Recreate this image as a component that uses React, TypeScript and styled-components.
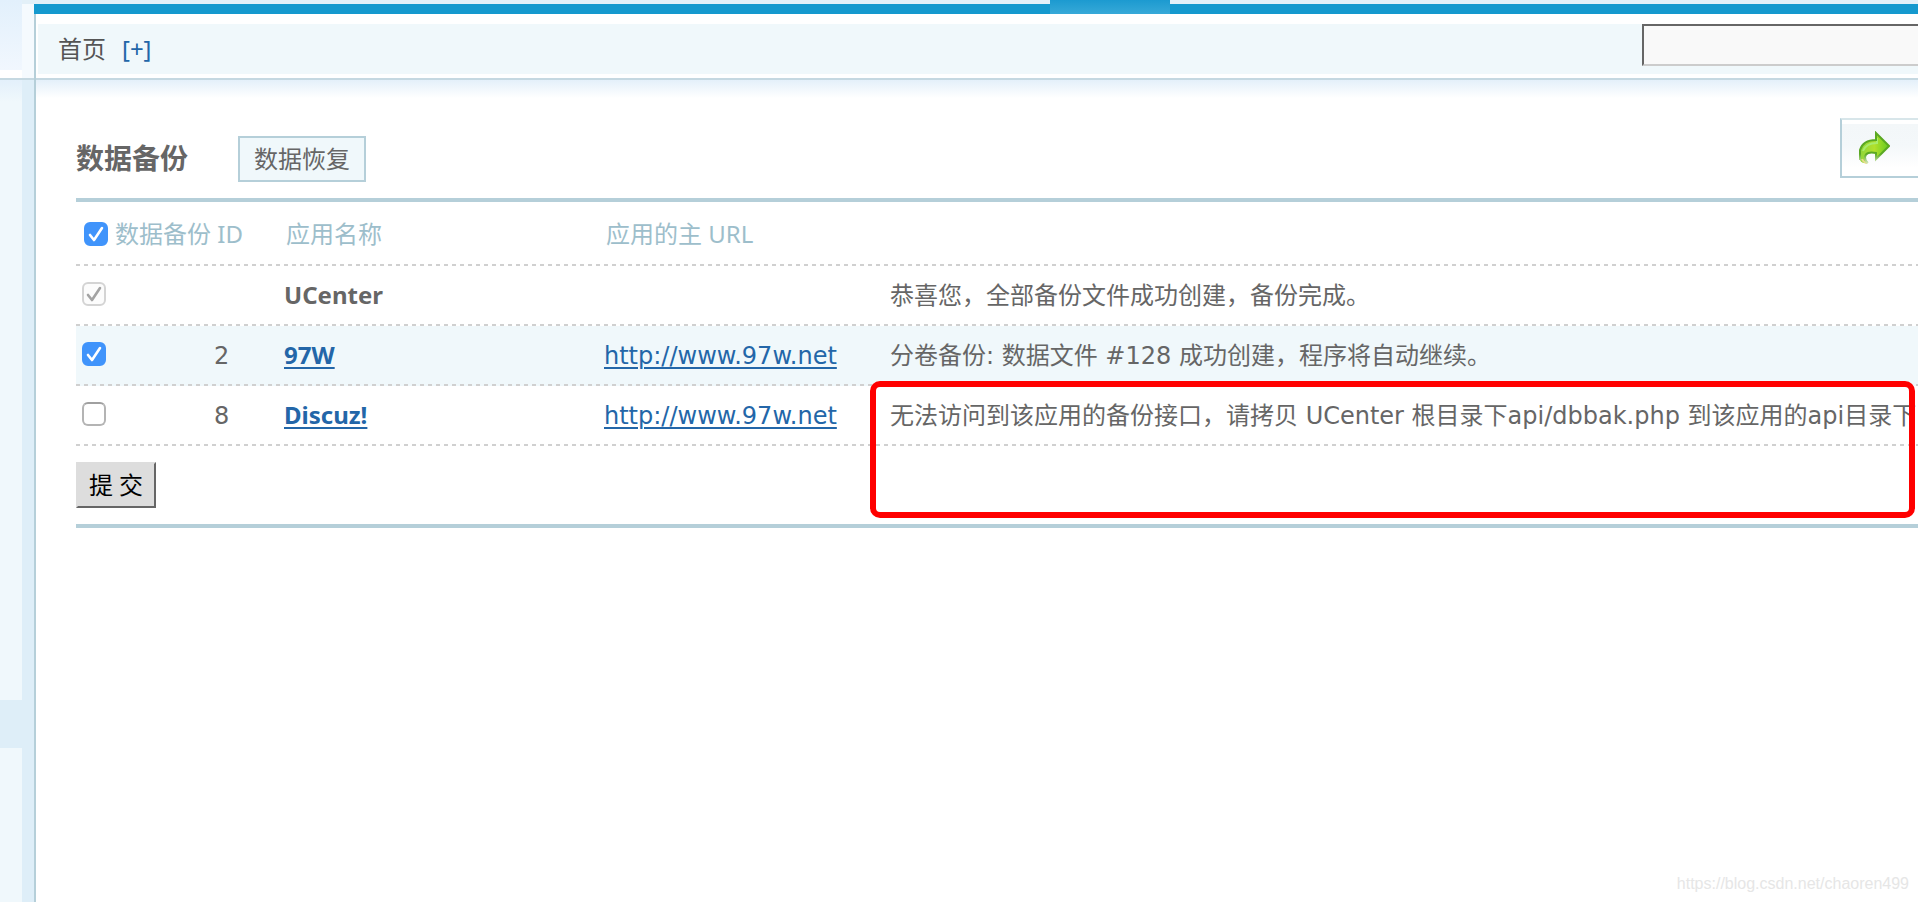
import React from "react";
import styled, { createGlobalStyle } from "styled-components";

const GlobalStyle = createGlobalStyle`
  *, *::before, *::after { box-sizing: border-box; }
  body {
    margin: 0;
    background: #fff;
    color: #666;
    font: 24px/32px "Noto Sans", "Noto Sans CJK SC", sans-serif;
  }
`;

const Page = styled.div`
  position: relative;
  display: flex;
  min-height: 100vh;
  overflow: hidden;
`;

const Sidebar = styled.aside`
  flex: none;
  width: 34px;
  display: flex;
  flex-direction: column;
`;

const SidebarTop = styled.div`
  display: flex;
  height: 80px;
  border-bottom: 2px solid #c5d8e1;
`;

const SidebarBanner = styled.div`
  width: 22px;
  height: 70px;
  background: linear-gradient(#e2f0fc, #f1f7fe);
`;

const SidebarBannerEdge = styled.div`
  flex: 1;
  border-top: 4px solid #e3f0f8;
  background: #f5fafe;
`;

const SidebarBody = styled.div`
  flex: 1;
  display: flex;
  flex-direction: column;
  background: #deeef8;
`;

const MenuStrip = styled.nav`
  flex: 1;
  width: 22px;
  padding-top: 620px;
  background: linear-gradient(#e3f0fb, #f0f8fc 22px);
`;

const ActiveMenuItem = styled.div`
  height: 48px;
  background: #deeef8;
`;

const Main = styled.div`
  flex: 1;
  min-width: 0;
  display: flex;
  flex-direction: column;
`;

const TopBar = styled.div`
  height: 14px;
  border-top: 4px solid #e3f0f8;
  background: #1599ce;
`;

const ActiveTab = styled.div`
  width: 120px;
  height: 14px;
  margin: -4px 0 0 1016px;
  background: linear-gradient(#1c9ad0, #37a9d8);
`;

const Frame = styled.div`
  flex: 1;
  display: flex;
  flex-direction: column;
  border-left: 2px solid #b5cfd9;
`;

const Crumbs = styled.header`
  display: flex;
  align-items: flex-start;
  height: 50px;
  margin: 10px 0 4px 2px;
  padding-left: 20px;
  background: #f0f8fb;
`;

const CrumbText = styled.div`
  display: flex;
  gap: 16px;
  padding-top: 9px;
  color: #555;
`;

const AddLink = styled.a`
  color: #2366a8;
  text-decoration: none;
`;

const SearchBox = styled.input`
  width: 276px;
  height: 42px;
  margin-left: auto;
  border: 2px solid #666;
  border-right: 0;
  border-bottom-color: #ccc;
  border-radius: 0;
  background: #f9f9f9;
  font: inherit;
  outline: none;
`;

const Content = styled.main`
  flex: 1;
  position: relative;
  padding: 38px 0 0 40px;
  border-top: 2px solid #c5d8e1;
  background: linear-gradient(#e4f0fa, #fff 18px);
`;

const TitleRow = styled.div`
  display: flex;
  align-items: flex-start;
  height: 80px;
`;

const Title = styled.h1`
  width: 162px;
  margin: 20px 0 0;
  font-size: 28px;
  line-height: 40px;
  font-weight: 700;
`;

const RestoreButton = styled.button`
  width: 128px;
  height: 46px;
  margin-top: 18px;
  padding: 0;
  border: 2px solid #b5cfd9;
  background: #f0f8fb;
  color: #666;
  font: inherit;
  white-space: nowrap;
`;

const ShareButton = styled.button`
  width: 78px;
  height: 60px;
  margin-left: auto;
  padding: 0 0 0 16px;
  border: 2px solid #b5cfd9;
  border-top-color: #d8e6ea;
  border-right: 0;
  background: linear-gradient(#fff 4px, #f3f7f9 4px, #f4f8fa 26px, #fff 48px);
  text-align: left;

  svg { display: block; }
`;

const Panel = styled.form`
  border-top: 4px solid #b5cfd9;
  border-bottom: 4px solid #b5cfd9;
`;

const Table = styled.table`
  width: 100%;
  table-layout: fixed;
  border-collapse: collapse;
`;

const Row = styled.tr<{ $tall?: boolean; $tint?: boolean }>`
  height: ${(p) => (p.$tall ? 64 : 60)}px;
  background:
    repeating-linear-gradient(90deg, #d0d0d0 0 4px, transparent 4px 8px) left bottom / 100% 2px no-repeat,
    ${(p) => (p.$tint ? "#f0f8fb" : "transparent")};
`;

const HeadCell = styled.th`
  padding: 0 0 0 2px;
  color: #9dbecb;
  font-weight: 400;
  text-align: left;
  white-space: nowrap;
`;

const Cell = styled.td`
  padding: 0;
  font-family: "DejaVu Sans", "Noto Sans CJK SC", sans-serif;
  white-space: nowrap;
`;

const CheckCell = styled(Cell)`
  padding: 0 0 4px 6px;
`;

const NameCell = styled.td`
  padding: 0 0 2px;
  font-weight: 700;
  white-space: nowrap;
`;

const Label = styled.label`
  display: flex;
  align-items: center;
  gap: 7px;
  padding-left: 6px;
`;

const CheckBox = styled.span`
  display: grid;
  width: 24px;
  height: 24px;

  > * { grid-area: 1 / 1; }
  svg { pointer-events: none; }
`;

const CheckInput = styled.input`
  appearance: none;
  width: 24px;
  height: 24px;
  margin: 0;
  border: 2px solid #b4b4b4;
  border-top-color: #a0a0a0;
  border-radius: 6px;
  background: #fff;

  &:checked { border-color: #4094fb; background: #4094fb; }
  &:disabled { border-color: #d4d4d4; background: #fcfcfc; }
  & + svg { visibility: hidden; }
  &:checked + svg { visibility: visible; }
`;

const Link = styled.a`
  color: #2366a8;
  text-underline-offset: 3px;
  text-decoration-thickness: 2px;
`;

const Actions = styled.div`
  padding: 16px 0;
`;

const Submit = styled.button`
  display: block;
  width: 80px;
  height: 46px;
  padding: 0;
  border: 2px solid;
  border-color: #ddd #666 #666 #ddd;
  background: #ddd;
  color: #000;
  font: inherit;
`;

const Highlight = styled.div`
  position: absolute;
  top: 301px;
  left: 834px;
  right: 3px;
  height: 137px;
  border: 6px solid #f00;
  border-radius: 10px;
  pointer-events: none;
`;

const Watermark = styled.div`
  position: absolute;
  right: 9px;
  bottom: 8px;
  color: #e6e6e6;
  font: 16px/20px "Liberation Sans", sans-serif;
`;

function Check({ label, id, checked, disabled }: { label?: string; id?: string; checked?: boolean; disabled?: boolean }) {
  return (
    <CheckBox>
      <CheckInput type="checkbox" id={id} aria-label={label} defaultChecked={checked} disabled={disabled} />
      <svg width="24" height="24" viewBox="0 0 24 24" fill="none" aria-hidden="true">
        <path d="M6 13 L10 18 L18 6" stroke={disabled ? "#a3a3a3" : "#fff"} strokeWidth="2.6" strokeLinecap="round" strokeLinejoin="round" />
      </svg>
    </CheckBox>
  );
}

function ShareArrow() {
  return (
    <svg width="32" height="34" viewBox="0 0 32 34" aria-hidden="true">
      <defs>
        <linearGradient id="leaf" x1="0" y1="0" x2="1" y2="0">
          <stop offset="0" stopColor="#8fd63a" />
          <stop offset="0.5" stopColor="#b2e02c" />
          <stop offset="1" stopColor="#63cb20" />
        </linearGradient>
        <linearGradient id="rim" x1="0" y1="0" x2="0" y2="1">
          <stop offset="0.7" stopColor="#5aa823" />
          <stop offset="1" stopColor="#cfe6b4" />
        </linearGradient>
      </defs>
      <path d="M18 2 L31 15 L18 28 V22 Q8 20 7 26 Q7 30 10 32 Q4 33 2 29 V19 Q5 9 18 9 Z" fill="url(#leaf)" />
      <path d="M5 20 Q8 12 19 12 V7" fill="none" stroke="#a8ec6c" strokeWidth="2" />
      <path d="M4 28 Q5 31 9 32" fill="none" stroke="#e6dc8a" strokeWidth="2" />
      <path d="M10 32 Q7 30 7 26 Q8 20 18 22 V28 L31 15 L18 2 V9 Q5 9 2 19 V29" fill="none" stroke="url(#rim)" strokeWidth="2" />
    </svg>
  );
}

const apps = [
  { name: "UCenter", message: "恭喜您，全部备份文件成功创建，备份完成。", checked: true, disabled: true },
  { id: 2, name: "97W", url: "http://www.97w.net", message: "分卷备份: 数据文件 #128 成功创建，程序将自动继续。", checked: true },
  { id: 8, name: "Discuz!", url: "http://www.97w.net", message: "无法访问到该应用的备份接口，请拷贝 UCenter 根目录下api/dbbak.php 到该应用的api目录下" },
];

export default function App() {
  return (
    <Page>
      <GlobalStyle />
      <Sidebar>
        <SidebarTop>
          <SidebarBanner />
          <SidebarBannerEdge />
        </SidebarTop>
        <SidebarBody>
          <MenuStrip>
            <ActiveMenuItem />
          </MenuStrip>
        </SidebarBody>
      </Sidebar>
      <Main>
        <TopBar>
          <ActiveTab />
        </TopBar>
        <Frame>
          <Crumbs>
            <CrumbText>
              <span>首页</span>
              <AddLink href="#add">[+]</AddLink>
            </CrumbText>
            <SearchBox type="text" aria-label="搜索" />
          </Crumbs>
          <Content>
            <TitleRow>
              <Title>数据备份</Title>
              <RestoreButton type="button">数据恢复</RestoreButton>
              <ShareButton type="button" aria-label="返回">
                <ShareArrow />
              </ShareButton>
            </TitleRow>
            <Panel onSubmit={(e) => e.preventDefault()}>
              <Table>
                <colgroup>
                  <col style={{ width: 138 }} />
                  <col style={{ width: 70 }} />
                  <col style={{ width: 320 }} />
                  <col style={{ width: 286 }} />
                  <col />
                </colgroup>
                <thead>
                  <Row $tall>
                    <HeadCell colSpan={2}>
                      <Label htmlFor="all">
                        <Check id="all" checked />
                        数据备份 ID
                      </Label>
                    </HeadCell>
                    <HeadCell>应用名称</HeadCell>
                    <HeadCell>应用的主 URL</HeadCell>
                    <HeadCell />
                  </Row>
                </thead>
                <tbody>
                  {apps.map((app) => (
                    <Row key={app.name} $tint={app.id === 2}>
                      <CheckCell>
                        <Check label={app.name} checked={app.checked} disabled={app.disabled} />
                      </CheckCell>
                      <Cell>{app.id}</Cell>
                      <NameCell>{app.id ? <Link href="#app">{app.name}</Link> : app.name}</NameCell>
                      <Cell>{app.url && <Link href={app.url}>{app.url}</Link>}</Cell>
                      <Cell>{app.message}</Cell>
                    </Row>
                  ))}
                </tbody>
              </Table>
              <Actions>
                <Submit type="submit">提 交</Submit>
              </Actions>
            </Panel>
            <Highlight />
          </Content>
        </Frame>
      </Main>
      <Watermark>https://blog.csdn.net/chaoren499</Watermark>
    </Page>
  );
}
